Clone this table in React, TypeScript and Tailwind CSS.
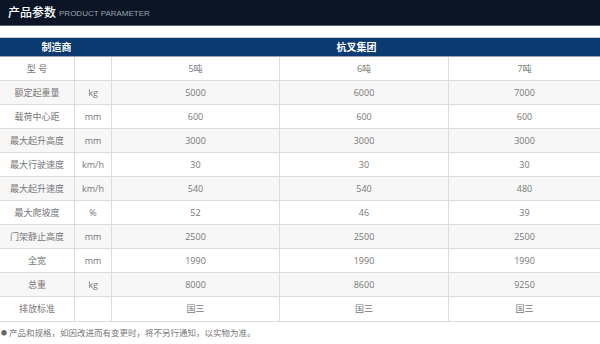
import React from "react";

const rows: [string, string, string, string, string][] = [
  ["型 号", "", "5吨", "6吨", "7吨"],
  ["额定起重量", "kg", "5000", "6000", "7000"],
  ["载荷中心距", "mm", "600", "600", "600"],
  ["最大起升高度", "mm", "3000", "3000", "3000"],
  ["最大行驶速度", "km/h", "30", "30", "30"],
  ["最大起升速度", "km/h", "540", "540", "480"],
  ["最大爬坡度", "%", "52", "46", "39"],
  ["门架静止高度", "mm", "2500", "2500", "2500"],
  ["全宽", "mm", "1990", "1990", "1990"],
  ["总重", "kg", "8000", "8600", "9250"],
  ["排放标准", "", "国三", "国三", "国三"],
];

export default function App() {
  return (
    <div
      className="w-[600px] h-[344px] bg-white overflow-hidden"
      style={{ fontFamily: '"Open Sans", "Noto Sans CJK SC", sans-serif' }}
    >
      <div className="h-[26px] bg-[#0b1526] flex items-center pl-[8px] border-b border-[#5a6270]">
        <span className="text-white text-[12px] font-medium leading-none">产品参数</span>
        <span
          className="text-[#9aa3ad] text-[8px] ml-[3px] mt-[2px] leading-none"
          style={{ fontFamily: '"Liberation Sans", sans-serif' }}
        >
          PRODUCT PARAMETER
        </span>
      </div>
      <div className="h-[11px]" />
      <div className="border-t border-[#c9ced6] h-[20px] bg-[#0a3a70] border-b border-b-[#9aa3b0] flex items-center text-white text-[10px] font-bold">
        <div className="w-[113px] text-center">制造商</div>
        <div className="flex-1 text-center">杭叉集团</div>
      </div>
      <div className="grid grid-cols-[75px_37px_168px_169px_1fr] text-[9px] text-[#777] border-b border-[#dcdcdc]">
        {rows.map((r, i) => (
          <React.Fragment key={i}>
            {r.map((c, j) => (
              <div
                key={j}
                className={`h-[24px] flex items-center justify-center ${
                  i < rows.length - 1 ? "border-b" : ""
                } border-[#dcdcdc] ${j < 4 ? "border-r" : ""} ${
                  i % 2 === 1 ? "bg-[#f7f7f7]" : "bg-white"
                }`}
              >
                {c}
              </div>
            ))}
          </React.Fragment>
        ))}
      </div>
      <div className="mt-[5px] pl-[1px] text-[8.5px] text-[#777] flex items-center">
        <span className="text-[#666] mr-[2px] text-[6px]">●</span>
        产品和规格，如因改进而有变更时，将不另行通知，以实物为准。
      </div>
    </div>
  );
}
